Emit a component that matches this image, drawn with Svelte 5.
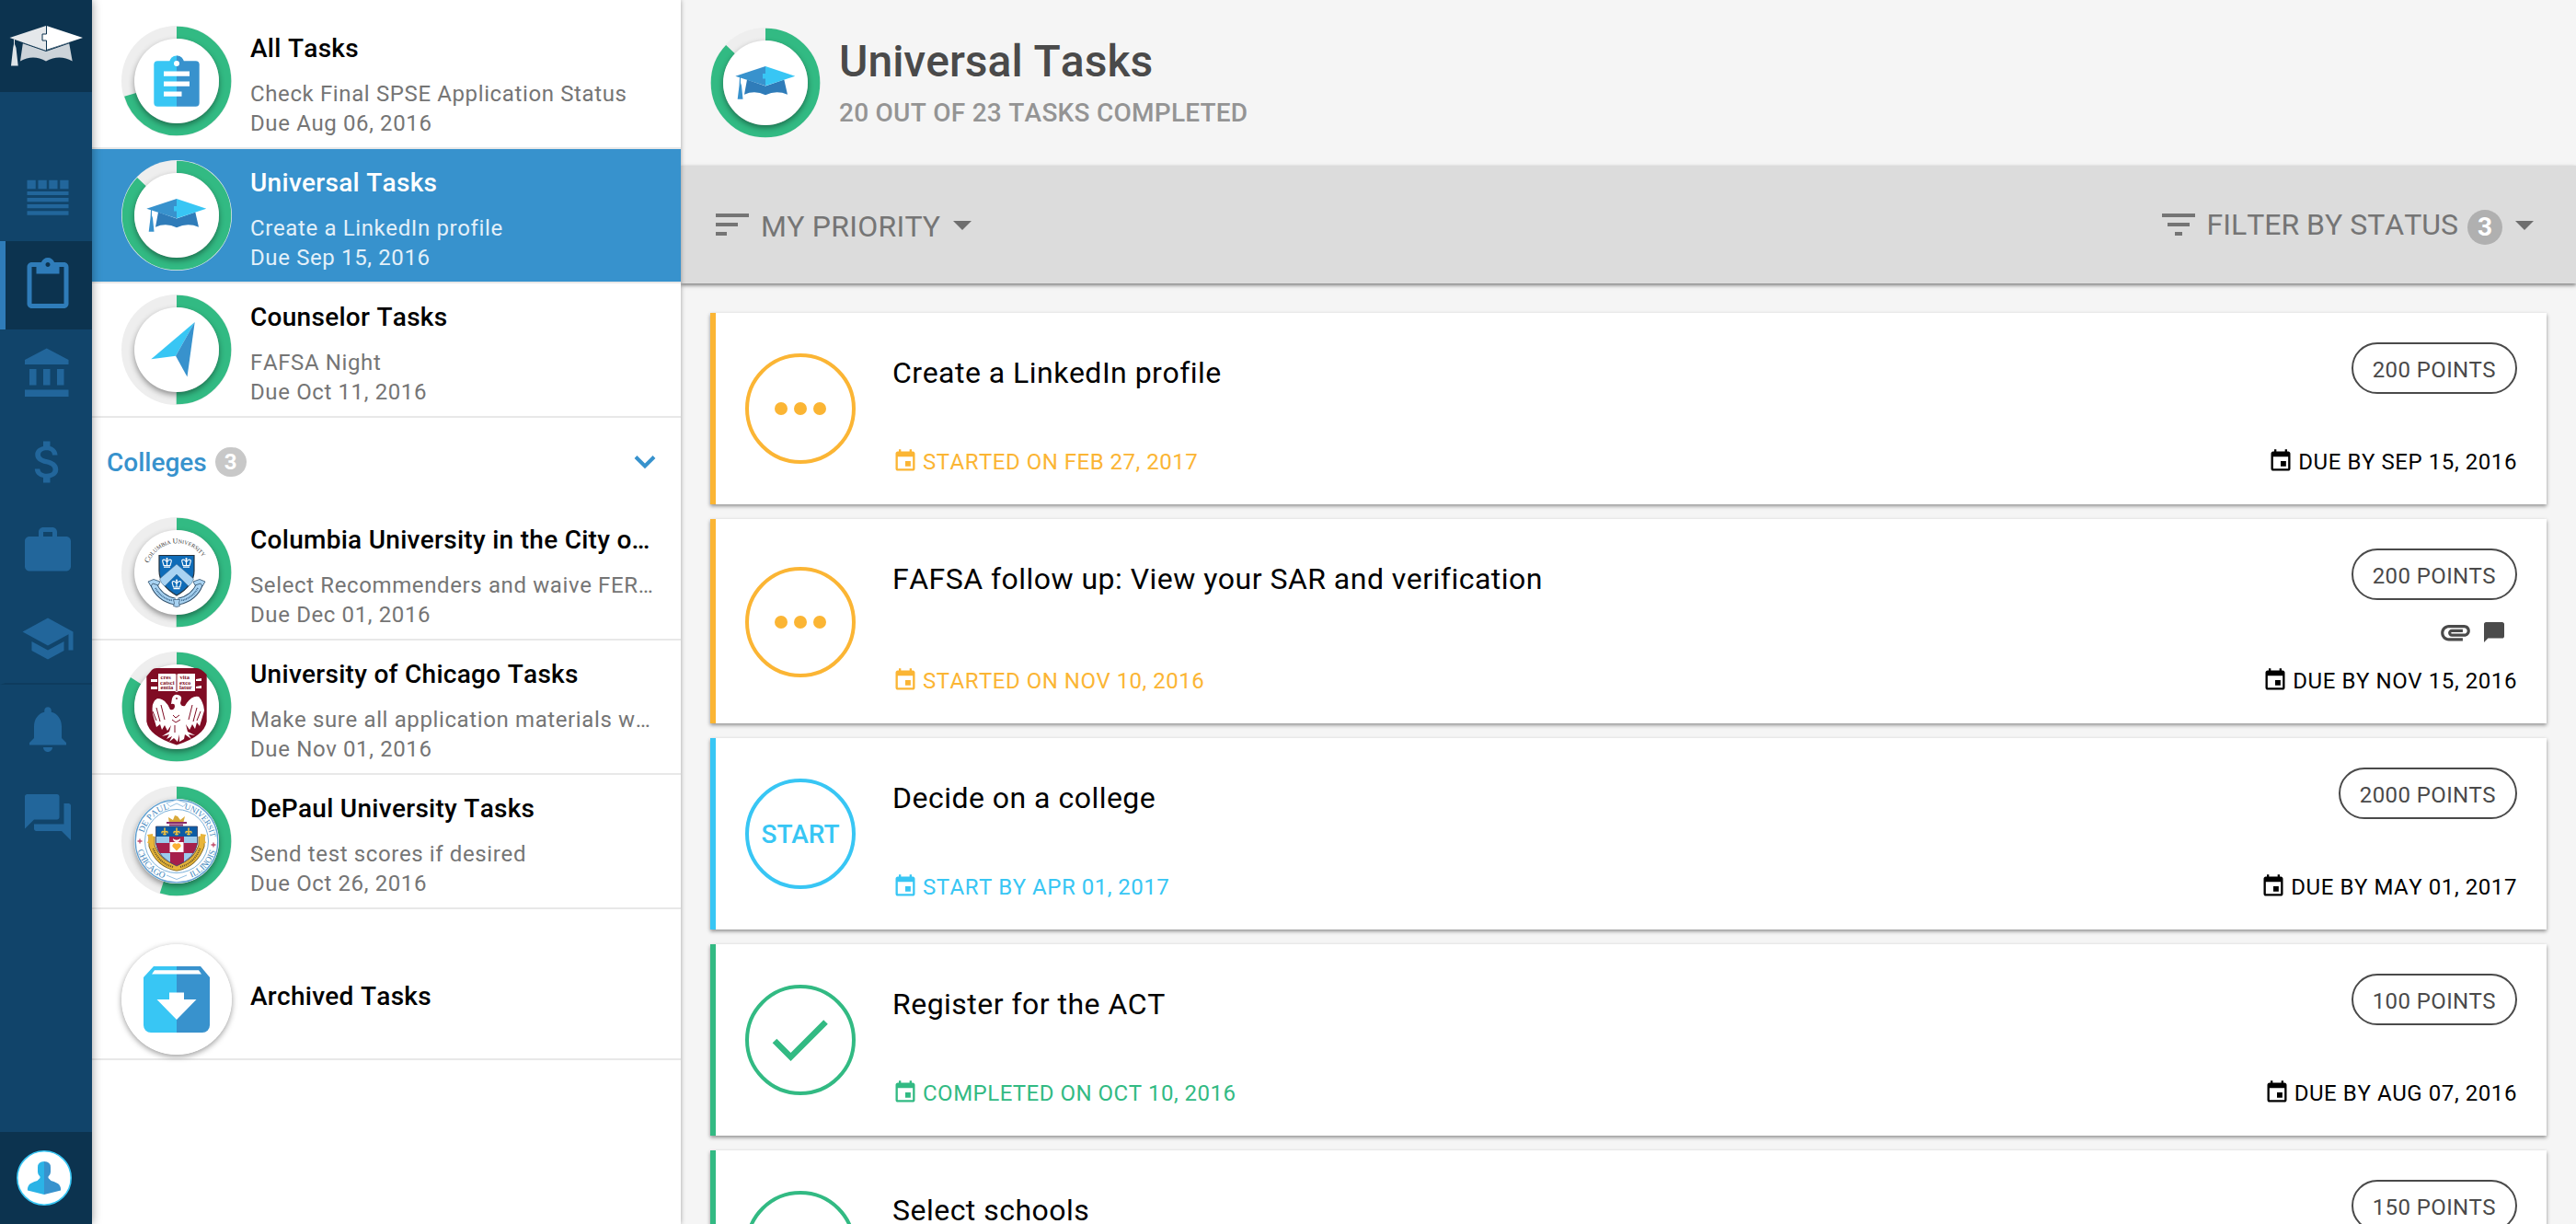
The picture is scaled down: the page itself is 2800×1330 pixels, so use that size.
<script>
  const railItems = [
    { name: 'calendar', path: 'M3 4.700h3.700v3.800H3zM7.800 4.700h3.700v3.800H7.800zM12.500 4.700h3.700v3.800h-3.700zM17.300 4.700H21v3.800h-3.700zM3 9.600h18v1.600H3zM3 12.400h18v1.700H3zM3 15.200h18v1.700H3zM3 18.100h18v1.800H3z' },
    { name: 'tasks', active: true, path: 'M19 2h-4.18C14.4.84 13.3 0 12 0c-1.3 0-2.4.84-2.82 2H5c-1.1 0-2 .9-2 2v16c0 1.1.9 2 2 2h14c1.1 0 2-.9 2-2V4c0-1.1-.9-2-2-2zm-7 0c.55 0 1 .45 1 1s-.45 1-1 1-1-.45-1-1 .45-1 1-1zm7 18H5V4h2v3h10V4h2v16z' },
    { name: 'colleges', path: 'M4 10v7h3v-7H4zm6 0v7h3v-7h-3zM2 22h19v-3H2v3zm14-12v7h3v-7h-3zm-4.5-9L2 6v2h19V6l-9.5-5z' },
    { name: 'aid', path: 'M11.8 10.9c-2.27-.59-3-1.2-3-2.15 0-1.09 1.01-1.85 2.7-1.85 1.78 0 2.44.85 2.5 2.1h2.21c-.07-1.72-1.12-3.3-3.21-3.81V3h-3v2.16c-1.94.42-3.5 1.68-3.5 3.61 0 2.31 1.91 3.46 4.7 4.13 2.5.6 3 1.48 3 2.41 0 .69-.49 1.79-2.7 1.79-2.06 0-2.87-.92-2.98-2.1h-2.2c.12 2.19 1.76 3.42 3.68 3.83V21h3v-2.15c1.95-.37 3.5-1.5 3.5-3.55 0-2.84-2.43-3.81-4.7-4.4z' },
    { name: 'careers', path: 'M20 6h-4V4c0-1.11-.89-2-2-2h-4c-1.11 0-2 .89-2 2v2H4c-1.11 0-1.99.89-1.99 2L2 19c0 1.11.89 2 2 2h16c1.11 0 2-.89 2-2V8c0-1.11-.89-2-2-2zm-6 0h-4V4h4v2z' },
    { name: 'school', divider: true, path: 'M5 13.18v4L12 21l7-3.82v-4L12 17l-7-3.82zM12 3L1 9l11 6 9-4.91V17h2V9L12 3z' },
    { name: 'alerts', path: 'M12 22c1.1 0 2-.9 2-2h-4c0 1.1.89 2 2 2zm6-6v-5c0-3.07-1.64-5.64-4.5-6.32V4c0-.83-.67-1.5-1.5-1.5s-1.5.67-1.5 1.5v.68C7.63 5.36 6 7.92 6 11v5l-2 2v1h16v-1l-2-2z' },
    { name: 'messages', path: 'M21 6h-2v9H6v2c0 .55.45 1 1 1h11l4 4V7c0-.55-.45-1-1-1zm-4 6V3c0-.55-.45-1-1-1H3c-.55 0-1 .45-1 1v14l4-4h10c.55 0 1-.45 1-1z' },
  ];

  const lists = [
    { title: 'All Tasks', next: 'Check Final SPSE Application Status', due: 'Due Aug 06, 2016', done: 0.703, emblem: 'clipboard', first: true },
    { title: 'Universal Tasks', next: 'Create a LinkedIn profile', due: 'Due Sep 15, 2016', done: 0.87, emblem: 'cap', selected: true },
    { title: 'Counselor Tasks', next: 'FAFSA Night', due: 'Due Oct 11, 2016', done: 0.5, emblem: 'plane' },
  ];

  const colleges = [
    { title: 'Columbia University in the City o…', next: 'Select Recommenders and waive FER…', due: 'Due Dec 01, 2016', done: 0.5, emblem: 'columbia' },
    { title: 'University of Chicago Tasks', next: 'Make sure all application materials w…', due: 'Due Nov 01, 2016', done: 0.839, emblem: 'chicago' },
    { title: 'DePaul University Tasks', next: 'Send test scores if desired', due: 'Due Oct 26, 2016', done: 0.549, emblem: 'depaul' },
  ];

  const tasks = [
    { title: 'Create a LinkedIn profile', state: 'started', when: 'STARTED ON FEB 27, 2017', due: 'DUE BY SEP 15, 2016', points: '200 POINTS' },
    { title: 'FAFSA follow up: View your SAR and verification', state: 'started', when: 'STARTED ON NOV 10, 2016', due: 'DUE BY NOV 15, 2016', points: '200 POINTS', extras: true },
    { title: 'Decide on a college', state: 'todo', when: 'START BY APR 01, 2017', due: 'DUE BY MAY 01, 2017', points: '2000 POINTS' },
    { title: 'Register for the ACT', state: 'complete', when: 'COMPLETED ON OCT 10, 2016', due: 'DUE BY AUG 07, 2016', points: '100 POINTS' },
    { title: 'Select schools', state: 'complete', when: 'COMPLETED ON OCT 10, 2016', due: 'DUE BY AUG 15, 2016', points: '150 POINTS' },
  ];

  const eventPath = 'M17 12h-5v5h5v-5zM16 1v2H8V1H6v2H5c-1.11 0-1.99.9-1.99 2L3 19c0 1.1.89 2 2 2h14c1.1 0 2-.9 2-2V5c0-1.1-.9-2-2-2h-1V1h-2zm3 18H5V8h14v11z';

  // Length of the progress arc at full completion
  const around = 2 * Math.PI * 52.6;
</script>

{#snippet crown(x, y)}
  <g transform="translate({x} {y})" fill="none" stroke="#fff" stroke-width="1.1">
    <path d="M-5 -2.5L-3.5 3H3.5L5 -2.5M-5 -2.5Q-2.5 -5 0 -.5Q2.500 -5 5 -2.500M0 -4V3M-3.500 4.600H3.500" />
  </g>
  <circle cx={x} cy={y - 4.3} r="1.1" fill="#fff" />
{/snippet}

{#snippet fleur(x)}
  <path d="M{x} -14.500V-6.500M{x - 3} -8.500Q{x - 3.5} -12 {x} -9.500Q{x + 3.5} -12 {x + 3} -8.500M{x - 1.8} -7.600H{x + 1.8}" fill="none" stroke="#f4c23c" stroke-width="1.5" />
{/snippet}

{#snippet emblem(kind)}
  {#if kind === 'clipboard'}
    <circle cx="0" cy="-19.500" r="8" fill="#38c6f4" />
    <path d="M0 -27.500a8 8 0 0 1 8 8H0z" fill="#3892cd" />
    <path d="M0 -21.700H-20.700a4 4 0 0 0 -4 4V23.700a4 4 0 0 0 4 4H0z" fill="#38c6f4" />
    <path d="M0 -21.700H20.700a4 4 0 0 1 4 4V23.700a4 4 0 0 1 -4 4H0z" fill="#3892cd" />
    <circle cx="0" cy="-19" r="3" fill="#fff" />
    <path d="M-14 -10.500h28v5.300h-28zM-14 .5h28v5.300h-28zM-14 11.500h19.500v5.200h-19.500z" fill="#fff" />
  {:else if kind === 'cap'}
    <path d="M-20 -3.500L-23 12.700Q-11.500 7.500 0 13.200Q12 7.500 24 12.700L20.300 -3.500L0 3.500z" fill="#2f7cb9" />
    <path d="M-32.700 -7.300L0 -18V3.300z" fill="#3892cd" />
    <path d="M0 -18L32.300 -7.300L0 3.300V-4.500H-3V-10H0z" fill="#38c6f4" />
    <path d="M-28 -6l1 0V0l1 3 1.500 14.700h-5.800L-28.500 3z" fill="#3892cd" />
  {:else if kind === 'plane'}
    <path d="M19.700 -30L-27.700 10.300L-1 6.700z" fill="#38c6f4" />
    <path d="M19.700 -30L-1 6.700L11.500 29.500z" fill="#3892cd" />
  {:else if kind === 'columbia'}
    <path id="columbia-arc" d="M-30.500 -10A33 33 0 0 1 31.500 -10" fill="none" />
    <text class="arc-text columbia-text"><textPath href="#columbia-arc">C<tspan font-size="6.100">OLUMBIA</tspan> U<tspan font-size="6.100">NIVERSITY</tspan></textPath></text>
    <g fill="none">
      <path d="M-25 13Q-19 28 -2 31.500M25 13Q19 28 2 31.500" stroke="#2f4f6b" stroke-width="7.600" />
      <path d="M-25 12.500Q-19 28 -2 31.500M25 12.500Q19 28 2 31.500" stroke="#a9d3f2" stroke-width="6" />
      <path d="M-23 17Q-17 28 -5 30.500M23 17Q17 28 5 30.500" stroke="#3d6a90" stroke-width="1.800" stroke-dasharray="1 .7" />
    </g>
    <path d="M-31 10L-25 7.500L-18 10L-20 14L-26 12L-28 15zM31 10L25 7.500L18 10L20 14L26 12L28 15z" fill="#a9d3f2" stroke="#2f4f6b" stroke-width=".8" />
    <path d="M-3.500 29.500h7l-1 4 1 3q-3.500 2-7 0l1-3z" fill="#a9d3f2" stroke="#2f4f6b" stroke-width=".7" />
    <path d="M-19 -18.500H19V-2Q19 14 0 25Q-19 14 -19 -2z" fill="#0f6cb8" stroke="#24333f" stroke-width="1.200" />
    <path d="M0 -9L18.500 7Q17 12 13 15L0 2L-13 15Q-17 12 -18.500 7z" fill="#a9d3f2" stroke="#3f6788" stroke-width=".5" />
    {@render crown(-10.5, -10.5)}
    {@render crown(10.5, -10.5)}
    {@render crown(0, 13)}
  {:else if kind === 'chicago'}
    <path d="M-27 -40Q-25 -42 -22 -42H22Q26 -42 32.700 -35V16Q30 32 0 41.500Q-30 32 -32.700 16V-33z" fill="#800c24" />
    <path d="M-28 -30h7v3h-7zM-28 -22h7v3h-7zM21 -30l6-1v3h-6zM21 -22l6-1v3h-6z" fill="#fff" />
    <path d="M-20 -36H-2L0 -35L2 -36H20V-17H2L0 -16L-2 -17H-20z" fill="#fff" />
    <path d="M0 -35V-17" stroke="#800c24" stroke-width="1" />
    <g class="book-text" fill="#800c24">
      <text x="-17.500" y="-30">cres</text><text x="-18" y="-24.500">catsci</text><text x="-17.500" y="-19">entia</text>
      <text x="3.500" y="-30">vita</text><text x="3" y="-24.500">exco</text><text x="3" y="-19">latur</text>
    </g>
    <path d="M-5 -9q2-5 6-4q5 1 4 5l-1 4q1 4 5 3q7-12 15-10q5 5 6 15l-5 17-3-4-2 7-3-5-3 6-4-6 2 8 8 4-7-1 3 5-7-5-1 5-5 3v-8l-2 8-4-4-5 4 3-6-6 3 3-5-8 2 8-5 2-7-4 6-3-6-3 5-2-6-4 3-4-14q-2-14 5-17q9 0 14 12q5 1 5-4q0-3-4-2z" fill="#fff" />
    <path d="M-22 1l4 15M-17-2l4 16M-26 5l4 10M22 1l-4 15M17-2l-4 16M26 5l-4 10M-4 9l3 3 4-3M-5 14l4 3 5-3M-2 20v8" fill="none" stroke="#800c24" stroke-width="1" />
    <circle cx="0" cy="-9" r=".9" fill="#800c24" />
  {:else if kind === 'depaul'}
    <path id="depaul-top" d="M-36.500 -5A37 37 0 0 1 36.500 -5" fill="none" />
    <path id="depaul-low" d="M-43.500 4A43.800 43.800 0 0 0 43.500 4" fill="none" />
    <circle r="44.800" fill="none" stroke="#5f9fd0" stroke-width="1.300" />
    <path d="M-11 -41.500L0 -45L11 -41.500L7 -37.500L0 -41L-7 -37.500zM-11 37L0 41.500L11 37" fill="#fff" stroke="#7ab0da" stroke-width=".8" />
    <circle r="34.500" fill="none" stroke="#7ab0da" stroke-width="1" />
    <text class="arc-text depaul-text"><textPath href="#depaul-top" startOffset="4">DE PAUL</textPath></text>
    <text class="arc-text depaul-text tight"><textPath href="#depaul-top" startOffset="60">UNIVERSITY</textPath></text>
    <text class="arc-text depaul-text"><textPath href="#depaul-low" startOffset="6">CHICAGO</textPath></text>
    <text class="arc-text depaul-text"><textPath href="#depaul-low" startOffset="80">ILLINOIS</textPath></text>
    <path d="M-42.500 0h5M-40 -2.500v5M37.500 4h5M40 1.500v5" stroke="#c04a6a" stroke-width="1.300" />
    <g fill="none">
      <path d="M-27 -5V5Q-20 25 0 29Q20 25 27 5V-5" stroke="#76601f" stroke-width="7" />
      <path d="M-27 -5.500V5Q-20 25 0 29Q20 25 27 5V-5.500" stroke="#e8b53a" stroke-width="5.400" />
      <path d="M-25.500 8Q-19 24 -4 28M25.500 8Q19 24 4 28" stroke="#6d5c2c" stroke-width="2" stroke-dasharray="1.200 .9" />
    </g>
    <path d="M-32 -7l6-1v11l-6-1 2-4.500zM32 -7l-6-1v11l6-1-2-4.500z" fill="#e8b53a" />
    <path d="M-8 -19l-1-7 5 3 2-5 3 1 3 4 5-4-2 8z" fill="#d9a93a" />
    <path d="M-11 -20h22M-8 -17.500h15" stroke="#8a2d6a" stroke-width="2" />
    <clipPath id="depaul-shield"><path d="M-22.500 -16H22.500V3Q20 18 0 27Q-20 18 -22.500 3z" /></clipPath>
    <g clip-path="url(#depaul-shield)">
      <path d="M-23 -16H23V28H-23z" fill="#a61f4b" />
      <path d="M-23 -5h15v7h-15zM8 -5h15v7h-15zM-20 13h13v12h-13zM8 13h13v12h-13z" fill="#9ccbec" />
      <path d="M-7.500 1h15v11h-15z" fill="#fff" />
      <path d="M-23 -16H23V-5H-23z" fill="#0c5ba5" />
    </g>
    <path d="M-22.500 -16H22.500V3Q20 18 0 27Q-20 18 -22.500 3z" fill="none" stroke="#3a4a70" stroke-width=".8" />
    {@render fleur(-13)}
    {@render fleur(0)}
    {@render fleur(13)}
    <path d="M-4 -3a4 4 0 0 0 8 0a4.500 3 0 0 1 -8 0z" fill="#fff" />
    <path d="M0 10.500L-4.500 6a2.800 2.800 0 0 1 4.500-3a2.800 2.800 0 0 1 4.500 3z" fill="#fbb034" />
  {/if}
{/snippet}

{#snippet ring(item)}
  <svg class="ring" viewBox="-60 -60 120 120">
    <circle r="60" fill="#eeeeee" />
    <circle r="52.600" fill="none" stroke="#32ba83" stroke-width="13.400" transform="rotate(-90)" stroke-dasharray="{around * item.done} {around}" />
    <circle class="disc" r="46" fill="#fff" />
    {@render emblem(item.emblem)}
  </svg>
{/snippet}

{#snippet row(item)}
  <div class="row" class:selected={item.selected} class:first={item.first}>
    {@render ring(item)}
    <div class="row-text">
      <div class="row-title">{item.title}</div>
      <div class="row-sub">{item.next}</div>
      <div class="row-sub">{item.due}</div>
    </div>
  </div>
{/snippet}

{#snippet eventIcon()}
  <svg class="event" viewBox="0 0 24 24"><path d={eventPath} /></svg>
{/snippet}

<div class="app">
  <nav class="rail">
    <div class="logo">
      <svg viewBox="0 0 100 100">
        <path d="M25 46L22 66.500Q36 58.500 50 66.500Q64.500 58.500 78.700 66.500L75 46L50 55z" fill="#ccd3d9" />
        <path d="M10.500 41L50 28V55z" fill="#e5e8eb" />
        <path d="M50.500 28L90 41L50.500 54V44H46.500V37H50.500z" fill="#fff" />
        <path d="M50.500 28V37H46V44H50.500V54.500M24 46.500L50 55.500L76 46.500" fill="none" stroke="#0c334f" stroke-width="1" />
        <path d="M15 43h1v5l1.500 4 2.200 19.500h-7.700l2.200-19.500 .8-4z" fill="#dfe4e8" />
      </svg>
    </div>
    <div class="rail-items">
      {#each railItems as item (item.name)}
        <div class="rail-item" class:active={item.active} class:divider={item.divider}>
          <svg viewBox="0 0 24 24"><path d={item.path} /></svg>
        </div>
      {/each}
    </div>
    <div class="profile">
      <svg viewBox="-30 -30 60 60">
        <circle r="29.200" fill="#fff" stroke="#38c6f4" stroke-width="1.600" />
        <path d="M0 -18q-7 0-7 6.500v5q0 3 2.500 5v1.500l-3 3q-7 2-9 4.500q-2 3-1.500 6L0 18z" fill="#2bb3e6" />
        <path d="M0 -18q7 0 7 6.500v5q0 3-2.500 5v1.500l3 3q7 2 9 4.500q2 3 1.500 6L0 18z" fill="#3892cd" />
      </svg>
    </div>
  </nav>

  <aside class="panel">
    {#each lists as item (item.title)}
      {@render row(item)}
    {/each}
    <div class="group">
      <span class="group-title">Colleges</span>
      <span class="group-badge">3</span>
      <svg class="chevron" viewBox="0 0 24 16"><path d="M2 2.500L12 12.500L22 2.500" /></svg>
    </div>
    {#each colleges as item (item.title)}
      {@render row(item)}
    {/each}
    <div class="row archived">
      <svg class="ring archive-ring" viewBox="-60 -60 120 120">
        <circle r="60" fill="#fff" />
        <path d="M0 -36H-25L-36 -24V28a8 8 0 0 0 8 8H0z" fill="#38c6f4" />
        <path d="M0 -36H26L36 -24V28a8 8 0 0 1 -8 8H0z" fill="#3892cd" />
        <path d="M-27 -27.500L-24 -31.700H24L27 -27.500zM-8 -7.500H8V0H21.500L0 22L-21.500 0H-8z" fill="#fff" />
      </svg>
      <div class="row-title">Archived Tasks</div>
    </div>
  </aside>

  <main>
    <header>
      {@render ring(lists[1])}
      <div>
        <h1>Universal Tasks</h1>
        <p>20 OUT OF 23 TASKS COMPLETED</p>
      </div>
    </header>

    <div class="toolbar">
      <div class="tool sort">
        <svg class="lines" viewBox="0 0 36 24"><path d="M0 0h36v4H0zM0 10h24v4H0zM0 20h12v4H0z" /></svg>
        <span>MY PRIORITY</span>
        <svg class="caret" viewBox="0 0 20 10"><path d="M0 0h20L10 10z" /></svg>
      </div>
      <div class="tool filter">
        <svg class="lines" viewBox="0 0 36 24"><path d="M0 0h36v4H0zM6 10h24v4H6zM14 20h8v4h-8z" /></svg>
        <span>FILTER BY STATUS</span>
        <b>3</b>
        <svg class="caret" viewBox="0 0 20 10"><path d="M0 0h20L10 10z" /></svg>
      </div>
    </div>

    <div class="cards">
      {#each tasks as task (task.title)}
        <article class="card {task.state}" class:tall={task.extras}>
          <div class="status">
            {#if task.state === 'started'}
              <i></i><i></i><i></i>
            {:else if task.state === 'todo'}
              START
            {:else}
              <svg viewBox="0 0 62 48"><path d="M3 25L20.500 42.500L58.500 4.500" /></svg>
            {/if}
          </div>
          <div class="body">
            <h2>{task.title}</h2>
            <div class="meta">{@render eventIcon()}<span>{task.when}</span></div>
          </div>
          <div class="side">
            <div class="points">{task.points}</div>
            {#if task.extras}
              <div class="extras">
                <svg class="clip" viewBox="0 0 24 24"><path d="M2 12.500C2 9.460 4.460 7 7.500 7H18c2.210 0 4 1.790 4 4s-1.790 4-4 4H9.500C8.120 15 7 13.880 7 12.500S8.120 10 9.500 10H17v2H9.410c-.55 0-.55 1 0 1H18c1.100 0 2-.9 2-2s-.9-2-2-2H7.500C5.570 9 4 10.570 4 12.500S5.570 16 7.500 16H17v2H7.500C4.460 18 2 15.540 2 12.500z" /></svg>
                <svg class="note" viewBox="2 2 20 20"><path d="M20 2H4c-1.100 0-2 .9-2 2v18l4-4h14c1.100 0 2-.9 2-2V4c0-1.100-.9-2-2-2z" /></svg>
              </div>
            {/if}
            <div class="meta due">{@render eventIcon()}<span>{task.due}</span></div>
          </div>
        </article>
      {/each}
    </div>
  </main>
</div>

<style>
  :global(body) {
    margin: 0;
    overflow: hidden;
  }

  .app {
    display: flex;
    width: 2800px;
    height: 1330px;
    overflow: hidden;
    background: #f5f5f5;
    color: #000;
    font-family: Roboto, 'Liberation Sans', sans-serif;
    font-kerning: none;
  }

  svg {
    display: block;
    flex: none;
  }

  /* Icon rail */
  .rail {
    z-index: 3;
    display: flex;
    flex: none;
    flex-direction: column;
    width: 100px;
    background: #11446a;
    box-shadow: 0 0 10px rgba(0, 0, 0, 0.4);
  }

  .logo,
  .profile {
    height: 100px;
    background: #0c334f;
  }

  .logo svg {
    width: 100px;
    height: 100px;
  }

  .rail-items {
    flex: 1;
    padding-top: 66px;
  }

  .rail-item {
    height: 60px;
    padding: 18px 18px 18px 16px;
    border-left: 6px solid transparent;
  }

  .rail-item svg {
    width: 60px;
    height: 60px;
    fill: #22669b;
  }

  .rail-item.active {
    border-color: #2f7cb9;
    background: #0c334f;
  }

  .rail-item.active svg {
    fill: #2f7cb9;
  }

  .rail-item.divider {
    border-bottom: 2px solid #0e3c5e;
    border-left-color: #11446a;
  }

  .profile {
    display: flex;
  }

  .profile svg {
    width: 60px;
    height: 60px;
    margin: 20px 0 0 18px;
  }

  /* Task lists */
  .panel {
    z-index: 2;
    flex: none;
    width: 640px;
    background: #fff;
    box-shadow: 0 0 5px rgba(0, 0, 0, 0.35);
  }

  .row {
    display: flex;
    gap: 20px;
    height: 120px;
    padding: 12px 26px 12px 32px;
    border-bottom: 2px solid #e8e8e8;
  }

  .row.first {
    padding-top: 28px;
  }

  .row.selected {
    background: #3792cd;
    color: #fff;
  }

  .ring {
    width: 120px;
    height: 120px;
  }

  .disc {
    filter: drop-shadow(0 3px 3px rgba(0, 0, 0, 0.4));
  }

  .row-text {
    flex: 1;
    min-width: 0;
    padding-top: 8px;
  }

  .row-title,
  .row-sub {
    white-space: nowrap;
  }

  .row-title {
    height: 34px;
    margin-bottom: 16px;
    font-size: 28px;
    font-weight: 500;
    letter-spacing: 0.28px;
    line-height: 34px;
  }

  .row-sub {
    color: #757575;
    font-size: 24px;
    letter-spacing: 0.62px;
    line-height: 32px;
  }

  .selected .row-sub {
    color: #e3f0f9;
  }

  .group {
    display: flex;
    align-items: center;
    height: 96px;
    padding: 0 27px 0 16px;
  }

  .group-title {
    color: #3792cd;
    font-size: 28px;
    font-weight: 500;
  }

  .group-badge {
    width: 34px;
    height: 32px;
    margin-left: 9px;
    border-radius: 16px;
    background: #c8c8c8;
    color: #fff;
    font-size: 24px;
    font-weight: 700;
    line-height: 32px;
    text-align: center;
  }

  .chevron {
    width: 24px;
    height: 16px;
    margin-left: auto;
    fill: none;
    stroke: #3792cd;
    stroke-width: 4;
  }

  .archived {
    height: 120px;
    padding-top: 38px;
    padding-bottom: 4px;
  }

  .archived .row-title {
    padding-top: 40px;
  }

  .archive-ring {
    border-radius: 50%;
    box-shadow: 0 2px 6px rgba(0, 0, 0, 0.4);
  }

  .arc-text {
    font-family: 'Liberation Serif', serif;
  }

  .columbia-text {
    fill: #333;
    font-size: 8px;
    letter-spacing: -0.05px;
  }

  .depaul-text {
    fill: #3f87bd;
    font-size: 9.5px;
  }

  .depaul-text.tight {
    font-size: 9px;
    letter-spacing: -0.3px;
  }

  .book-text {
    font-family: 'Liberation Serif', serif;
    font-size: 6.5px;
    font-weight: 700;
  }

  /* Main column */
  main {
    display: flex;
    flex: 1;
    flex-direction: column;
    min-width: 0;
  }

  header {
    display: flex;
    flex: none;
    gap: 20px;
    height: 150px;
    padding: 30px 32px 0;
  }

  h1,
  h2,
  p {
    margin: 0;
  }

  h1 {
    padding-top: 9px;
    color: #4a4a4a;
    font-size: 48px;
    font-weight: 500;
    line-height: 56px;
  }

  p {
    margin-top: 11px;
    color: #949494;
    font-size: 28px;
    font-weight: 500;
    letter-spacing: 0.26px;
    line-height: 34px;
  }

  .toolbar {
    z-index: 1;
    display: flex;
    flex: none;
    justify-content: space-between;
    height: 128px;
    padding: 0 46px 0 38px;
    background: #dcdcdc;
    box-shadow: 0 2px 4px rgba(0, 0, 0, 0.5);
  }

  .tool {
    display: flex;
    align-items: center;
    color: #757575;
    font-size: 32px;
  }

  .lines {
    width: 36px;
    height: 24px;
    margin-right: 13px;
    fill: #757575;
  }

  .caret {
    width: 20px;
    height: 10px;
    margin-top: 2px;
    fill: #6e6e6e;
  }

  .sort span {
    padding-top: 4px;
    letter-spacing: 0.25px;
  }

  .sort .caret {
    margin-left: 14px;
  }

  .filter b {
    width: 38px;
    height: 38px;
    margin: 6px 14px 0 10px;
    border-radius: 50%;
    background: #b0b0b0;
    color: #fff;
    font-size: 28px;
    line-height: 38px;
    text-align: center;
  }

  .cards {
    display: flex;
    flex-direction: column;
    gap: 16px;
    padding: 32px 32px 0;
  }

  .card {
    display: flex;
    box-sizing: border-box;
    flex: none;
    height: 208px;
    padding: 32px 32px 0;
    border-left: 6px solid var(--tone);
    background: #fff;
    box-shadow: 0 2px 4px rgba(0, 0, 0, 0.42);
  }

  .card.tall {
    height: 222px;
  }

  .started {
    --tone: #fbb534;
  }

  .todo {
    --tone: #38c6f4;
  }

  .complete {
    --tone: #32ba83;
  }

  .status {
    display: flex;
    box-sizing: border-box;
    flex: none;
    align-items: center;
    justify-content: center;
    width: 120px;
    height: 120px;
    margin-top: 12px;
    border: 4px solid var(--tone);
    border-radius: 50%;
    color: var(--tone);
    font-size: 28px;
    font-weight: 500;
    font-kerning: normal;
    gap: 7px;
  }

  .tall .status {
    margin-top: 20px;
  }

  .status i {
    width: 14px;
    height: 14px;
    border-radius: 50%;
    background: var(--tone);
  }

  .status svg {
    width: 62px;
    height: 48px;
    fill: none;
    stroke: var(--tone);
    stroke-width: 6.500;
  }

  .body {
    display: flex;
    flex: 1;
    flex-direction: column;
    justify-content: space-between;
    padding: 14px 0 30px 40px;
  }

  h2 {
    font-size: 32px;
    font-weight: 400;
    letter-spacing: 0.48px;
    line-height: 38px;
  }

  .meta {
    display: flex;
    align-items: center;
    height: 32px;
    gap: 5px;
    color: var(--tone);
    font-size: 24px;
    letter-spacing: 0.5px;
    line-height: 32px;
  }

  .event {
    width: 28px;
    height: 28px;
    margin-top: -3px;
    fill: currentColor;
  }

  .side {
    display: flex;
    flex-direction: column;
    align-items: flex-end;
    padding-bottom: 30px;
  }

  .points {
    box-sizing: border-box;
    height: 56px;
    padding: 2px 21px 0;
    border: 2px solid #4a4a4a;
    border-radius: 28px;
    color: #4a4a4a;
    font-size: 24px;
    letter-spacing: 0.4px;
    line-height: 52px;
  }

  .extras {
    display: flex;
    align-items: center;
    gap: 12px;
    margin: 16px 14px 0 0;
    fill: #4a4a4a;
  }

  .clip {
    width: 38px;
    height: 38px;
  }

  .note {
    width: 22px;
    height: 22px;
  }

  .due {
    margin-top: auto;
    color: #000;
    letter-spacing: 0.58px;
  }
</style>
